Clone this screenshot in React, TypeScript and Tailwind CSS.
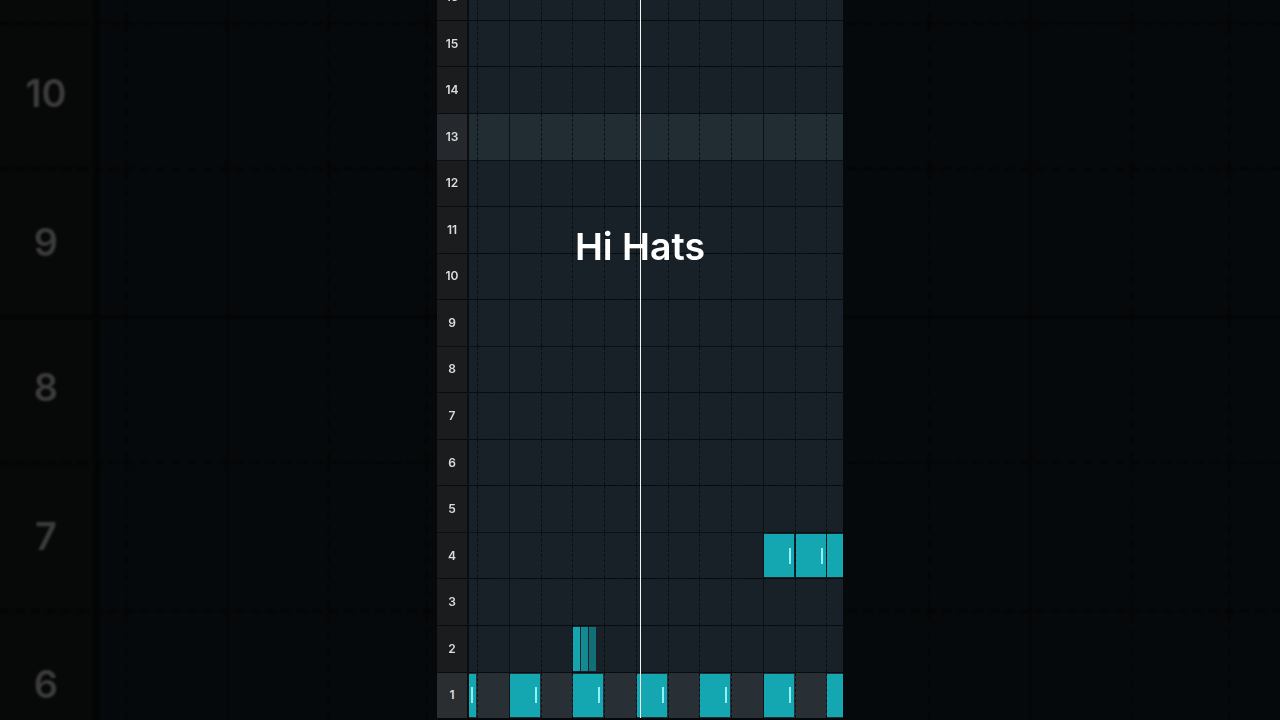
import React from 'react'

// piano-roll rows, top to bottom (16 is cut off by the top edge)
const rows = [16, 15, 14, 13, 12, 11, 10, 9, 8, 7, 6, 5, 4, 3, 2, 1]
// step columns; -2 is only partly visible, 10 runs out at the right edge
const cols = [-2, -1, 0, 1, 2, 3, 4, 5, 6, 7, 8, 9, 10]

const notes: Record<string, 'full' | 'split'> = {
  '1:-2': 'full',
  '1:0': 'full',
  '1:2': 'full',
  '1:4': 'full',
  '1:6': 'full',
  '1:8': 'full',
  '1:10': 'full',
  '4:8': 'full',
  '4:9': 'full',
  '4:10': 'full',
  '2:2': 'split',
}

function rowBg(row: number) {
  if (row === 13) return { num: 'bg-[#25292d]', grid: 'bg-[#212c33]' }
  if (row === 1) return { num: 'bg-[#2a2e31]', grid: 'bg-[#283035]' }
  return { num: 'bg-[#1a1c1e]', grid: 'bg-[#182128]' }
}

function Note() {
  return (
    <div className="flex h-full w-[30px] shrink-0 items-center justify-end bg-[#14a6b1]">
      <div className="mr-[3px] h-4 w-[2px] bg-[#8ef1f6]" />
    </div>
  )
}

function SplitNote() {
  return (
    <div className="flex h-full gap-px">
      <div className="h-full w-[7px] bg-[#15a5b0]" />
      <div className="h-full w-[7px] bg-[#138a92]" />
      <div className="h-full w-[7px] bg-[#126f77]" />
    </div>
  )
}

function Row({ row }: { row: number }) {
  const bg = rowBg(row)
  const solidTop = row % 4 === 0
  return (
    <div
      className={`flex h-[46.56px] shrink-0 border-t ${
        solidTop ? 'border-solid border-[#0a1014]' : 'border-dashed border-[#091014]'
      }`}
    >
      <div
        className={`flex w-[30px] items-center justify-center text-[12px] font-semibold text-[#dcdcdc] ${bg.num}`}
      >
        {row}
      </div>
      <div className="w-[2px] bg-[#0b0d0f]" />
      <div className={`grid flex-1 grid-cols-[8px_repeat(11,31.75px)_1fr] ${bg.grid}`}>
        {cols.map((c) => {
          const note = notes[`${row}:${c}`]
          const line =
            c === -2
              ? ''
              : c === 0 || c === 8
                ? 'border-l border-solid border-[#0b1115]'
                : 'border-l border-dashed border-[#091014]'
          return (
            <div
              key={c}
              className={`flex overflow-hidden py-px pr-px ${line} ${c === -2 ? 'justify-end' : ''}`}
            >
              {note === 'full' && <Note />}
              {note === 'split' && <SplitNote />}
            </div>
          )
        })}
      </div>
    </div>
  )
}

function Roll() {
  return (
    <div className="h-[720px] w-[406px] overflow-hidden">
      <div className="-mt-[26.7px] flex flex-col">
        {rows.map((r) => (
          <Row key={r} row={r} />
        ))}
      </div>
    </div>
  )
}

export default function App() {
  return (
    <div
      className="relative h-[720px] w-[1280px] overflow-hidden bg-[#07080a]"
      style={{ fontFamily: 'Inter, "Noto Sans", sans-serif' }}
    >
      {/* blurred, zoomed copy of the video behind */}
      <div className="absolute inset-0 flex justify-center">
        <div className="origin-[203px_360px] scale-[3.16] blur-[0.4px] brightness-[.27]">
          <Roll />
        </div>
      </div>

      <div className="relative flex justify-center">
        <div className="relative">
          <Roll />
          {/* playhead */}
          <div className="absolute left-[203px] top-0 h-[718px] w-px bg-[#f4f4f4]" />
          <div className="absolute left-0 right-0 top-[228px] text-center text-[37.5px] font-semibold leading-none text-white">
            Hi Hats
          </div>
        </div>
      </div>
    </div>
  )
}
